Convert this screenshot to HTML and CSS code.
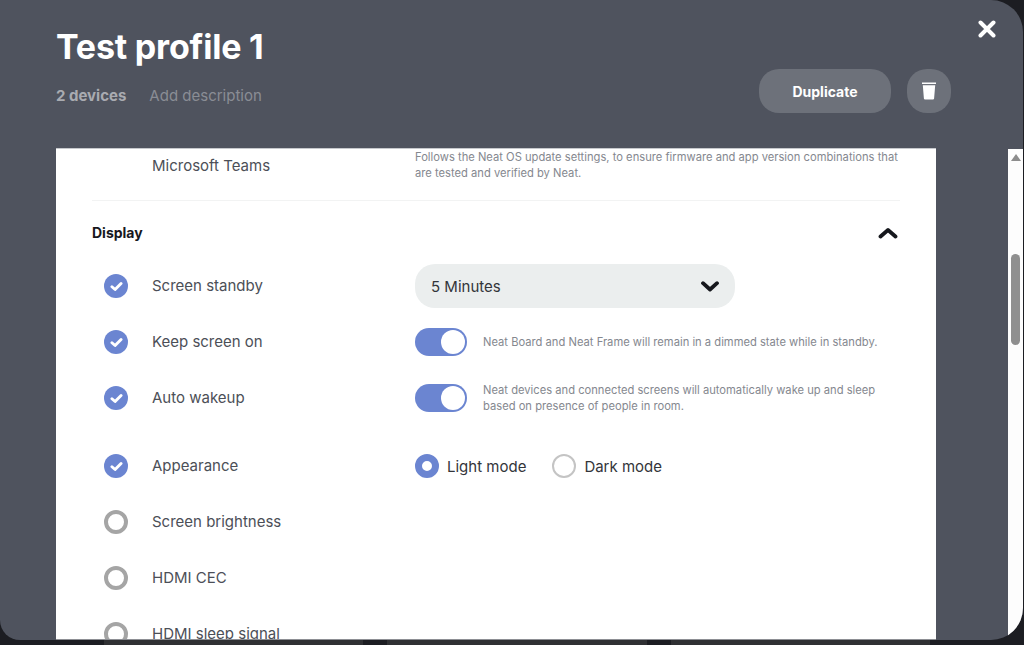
FILE: index.html

```html
<!DOCTYPE html>
<html>
<head lang="en">
    <meta charset="UTF-8">
    <title>Test profile 1</title>
    <link rel="stylesheet" href="styles.css">
</head>
<body>
<div class="modal">
    <div class="head">
        <div class="head-text">
            <h1>Test profile 1</h1>
            <p class="meta"><b>2 devices</b><span>Add description</span></p>
        </div>
        <div class="actions">
            <a href="#" class="btn">Duplicate</a>
            <a href="#" class="btn btn-icon">
                <svg width="16" height="18" viewBox="0 0 16 18"><path d="M1 .5h14v1.600H1z M1.800 3.200h12.400l-1.100 13.200a1.200 1.200 0 0 1-1.200 1.100H4.100a1.200 1.200 0 0 1-1.200-1.100z" fill="#fff"/></svg>
            </a>
        </div>
        <a href="#" class="close">
            <svg width="18" height="18" viewBox="0 0 18 18"><path d="M2.500 2.500l13 13M15.500 2.500l-13 13" stroke="#fff" stroke-width="4" stroke-linecap="round"/></svg>
        </a>
    </div>
    <div class="body">
        <div class="sheet">
            <div class="row-top">
                <div class="label">Microsoft Teams</div>
                <p class="hint">Follows the Neat OS update settings, to ensure firmware and app version combinations that are tested and verified by Neat.</p>
            </div>
            <div class="section-head">
                <h2>Display</h2>
                <svg width="20" height="12" viewBox="0 0 20 12"><path d="M2.500 9.500L10 3l7.500 6.500" fill="none" stroke="#16181d" stroke-width="3.800" stroke-linecap="round" stroke-linejoin="round"/></svg>
            </div>
            <div class="row">
                <span class="tick on"><svg width="13" height="11" viewBox="0 0 12 10"><path d="M1.800 5.200l2.900 2.600 5.500-5.600" fill="none" stroke="#fff" stroke-width="2.700" stroke-linecap="round" stroke-linejoin="round"/></svg></span>
                <div class="label">Screen standby</div>
                <div class="select">
                    <span>5 Minutes</span>
                    <svg width="18" height="11" viewBox="0 0 18 11"><path d="M2 2.200l7 6.300 7-6.300" fill="none" stroke="#16181d" stroke-width="3.800" stroke-linecap="round" stroke-linejoin="round"/></svg>
                </div>
            </div>
            <div class="row">
                <span class="tick on"><svg width="13" height="11" viewBox="0 0 12 10"><path d="M1.800 5.200l2.900 2.600 5.500-5.600" fill="none" stroke="#fff" stroke-width="2.700" stroke-linecap="round" stroke-linejoin="round"/></svg></span>
                <div class="label">Keep screen on</div>
                <span class="toggle"><i></i></span>
                <p class="hint">Neat Board and Neat Frame will remain in a dimmed state while in standby.</p>
            </div>
            <div class="row">
                <span class="tick on"><svg width="13" height="11" viewBox="0 0 12 10"><path d="M1.800 5.200l2.900 2.600 5.500-5.600" fill="none" stroke="#fff" stroke-width="2.700" stroke-linecap="round" stroke-linejoin="round"/></svg></span>
                <div class="label">Auto wakeup</div>
                <span class="toggle"><i></i></span>
                <p class="hint">Neat devices and connected screens will automatically wake up and sleep based on presence of people in room.</p>
            </div>
            <div class="row row-gap">
                <span class="tick on"><svg width="13" height="11" viewBox="0 0 12 10"><path d="M1.800 5.200l2.900 2.600 5.500-5.600" fill="none" stroke="#fff" stroke-width="2.700" stroke-linecap="round" stroke-linejoin="round"/></svg></span>
                <div class="label">Appearance</div>
                <div class="radios">
                    <span class="radio on"></span><span class="radio-text">Light mode</span>
                    <span class="radio"></span><span class="radio-text">Dark mode</span>
                </div>
            </div>
            <div class="row">
                <span class="tick"></span>
                <div class="label">Screen brightness</div>
            </div>
            <div class="row">
                <span class="tick"></span>
                <div class="label">HDMI CEC</div>
            </div>
            <div class="row">
                <span class="tick"></span>
                <div class="label">HDMI sleep signal</div>
            </div>
        </div>
        <div class="scrollbar">
            <span class="arrow-up"></span>
            <span class="thumb"></span>
        </div>
    </div>
</div>
</body>
</html>
```

FILE: styles.css

```css
html,body,h1,h2,p{margin:0;padding:0}
a{text-decoration:none}

html,body{
    height:100%;
    overflow:hidden;
}
body{
    /* the page behind the modal shows as a thin strip at the bottom */
    background:linear-gradient(to right,#1c1d22 104px,#2f3033 104px,#2f3033 363px,#1c1d22 363px,#1c1d22 387px,#2f3033 387px,#2f3033 647px,#1c1d22 647px,#1c1d22 671px,#2f3033 671px,#2f3033 930px,#1c1d22 930px);
    font-family:"Inter","Liberation Sans",sans-serif;
    color:#4c4f57;
}

.modal{
    width:1023px;
    height:640px;
    background:#4f535e;
    border-radius:0 32px 32px 20px;
    overflow:hidden;
    display:flex;
    flex-direction:column;
    position:relative;
}

/* header */
.head{
    height:148px;
    flex:none;
    padding:0 72px 0 56px;
    display:flex;
    justify-content:space-between;
    box-sizing:border-box;
}
.head h1{
    font-size:34px;
    line-height:42px;
    font-weight:700;
    letter-spacing:-0.2px;
    color:#fff;
    padding-top:26px;
}
.meta{
    font-size:15px;
    line-height:20px;
    margin-top:18px;
    display:flex;
    gap:23px;
}
.meta b{color:#a9abb1;font-weight:700;}
.meta span{color:#8a8d95;}
.actions{
    display:flex;
    gap:16px;
    padding-top:69px;
}
.btn{
    width:132px;
    height:44px;
    border-radius:20px;
    background:#6d717a;
    color:#fff;
    font-size:14px;
    font-weight:700;
    display:flex;
    align-items:center;
    justify-content:center;
}
.btn-icon{width:44px;}
.close{
    position:absolute;
    left:978px;
    top:20px;
    width:18px;
    height:18px;
}

/* scrolled body */
.body{
    flex:1;
    min-height:0;
    display:flex;
    justify-content:space-between;
    padding-left:56px;
}
.sheet{
    width:880px;
    background:#fff;
    border-top:1px solid #c6c8cc;
    border-bottom:1px solid #8d8f94;
    padding:0 36px;
    box-sizing:border-box;
    overflow:hidden;
}
.label{
    width:263px;
    flex:none;
    font-size:15px;
    line-height:20px;
}
.hint{
    font-size:11.2px;
    line-height:16px;
    color:#85888f;
}
.row-top{
    display:flex;
    height:52px;
    padding-left:60px;
    box-sizing:border-box;
    border-bottom:1px solid #f2f3f3;
}
.row-top .label{
    padding-top:7px;
}
.section-head{
    height:57px;
    padding:22px 2px 0 0;
    box-sizing:border-box;
    display:flex;
    align-items:flex-start;
    justify-content:space-between;
}
.section-head h2{
    font-size:14px;
    line-height:20px;
    font-weight:700;
    color:#16181d;
}
.section-head svg{margin-top:4px;}
.row{
    height:56px;
    padding-left:12px;
    display:flex;
    align-items:center;
}
.row-gap{margin-top:12px;}
.tick{
    width:24px;
    height:24px;
    flex:none;
    box-sizing:border-box;
    border-radius:50%;
    border:4px solid #a5a5a5;
    margin-right:24px;
}
.tick.on{
    background:#6b85d1;
    border:0;
    display:flex;
    align-items:center;
    justify-content:center;
}
.select{
    width:320px;
    height:44px;
    padding:0 16px;
    box-sizing:border-box;
    border-radius:20px;
    background:#ebeeee;
    color:#33353a;
    font-size:15px;
    display:flex;
    align-items:center;
    justify-content:space-between;
}
.toggle{
    width:52px;
    height:28px;
    flex:none;
    box-sizing:border-box;
    padding:2px;
    border-radius:14px;
    background:#6b85d1;
    display:flex;
    justify-content:flex-end;
    margin-right:16px;
}
.toggle i{
    width:24px;
    height:24px;
    border-radius:50%;
    background:#fff;
}
.row .hint{width:400px;}
.radios{
    display:flex;
    align-items:center;
    font-size:15px;
    color:#33353a;
}
.radio{
    width:24px;
    height:24px;
    box-sizing:border-box;
    border-radius:50%;
    border:2px solid #c4c4c4;
    margin-right:8px;
}
.radio.on{
    border:7px solid #6b85d1;
}
.radio-text{margin-right:26px;}

/* fake scrollbar */
.scrollbar{
    width:15px;
    background:#fdfdfd;
    margin-top:1px;
    display:flex;
    flex-direction:column;
    align-items:center;
    position:relative;
}
.arrow-up{
    width:0;
    height:0;
    border-left:5px solid transparent;
    border-right:5px solid transparent;
    border-bottom:7px solid #8d8d8d;
    margin-top:5px;
}
.thumb{
    position:absolute;
    top:105px;
    left:3px;
    width:9px;
    height:91px;
    border-radius:5px;
    background:#8f8f8f;
}
```
